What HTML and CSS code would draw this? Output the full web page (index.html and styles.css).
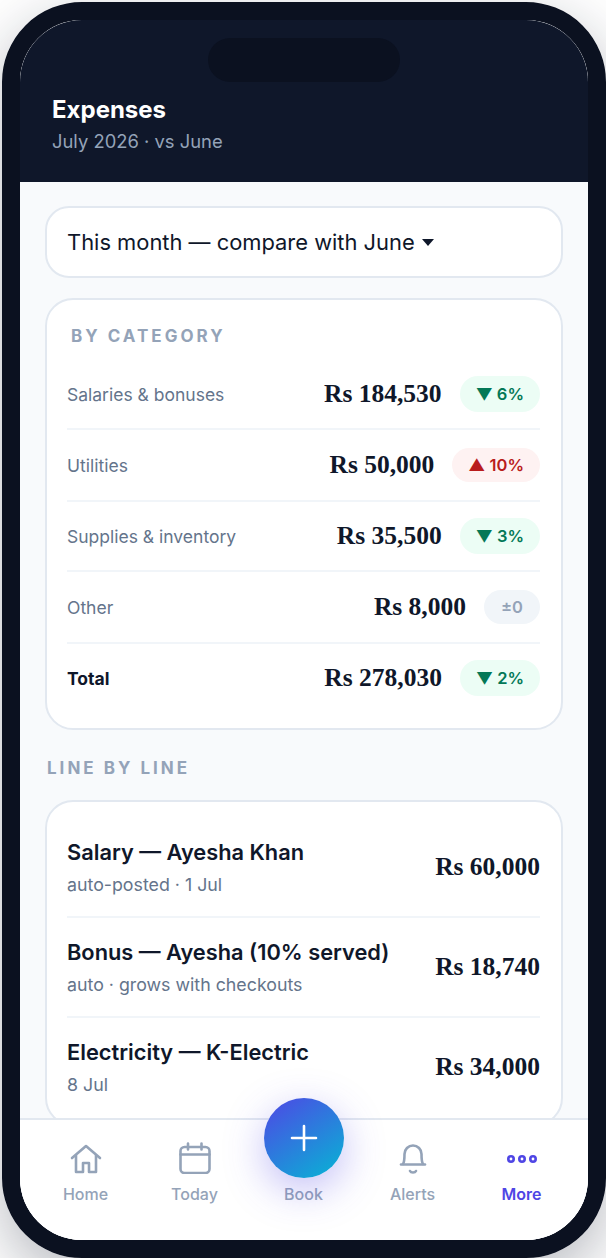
FILE: index.html
```html
<!DOCTYPE html>
<html>
<head>
<meta charset="utf-8"/>
<title>Expenses</title>
<link rel="stylesheet" href="styles.css">
</head>
<body>
<div class="phone">
  <div class="screen">
    <div class="notch"></div>
    <header class="top">
      <h1>Expenses</h1>
      <p>July 2026 · vs June</p>
    </header>

    <main class="content">
      <div class="picker">This month — compare with June <span class="caret"></span></div>

      <section class="card card-cat">
        <h2 class="cap">BY CATEGORY</h2>
        <div class="row">
          <span class="name">Salaries &amp; bonuses</span>
          <span class="amt">Rs 184,530</span>
          <span class="pill good"><i>▼</i> 6%</span>
        </div>
        <div class="row tall">
          <span class="name">Utilities</span>
          <span class="amt">Rs 50,000</span>
          <span class="pill bad"><i>▲</i> 10%</span>
        </div>
        <div class="row">
          <span class="name">Supplies &amp; inventory</span>
          <span class="amt">Rs 35,500</span>
          <span class="pill good"><i>▼</i> 3%</span>
        </div>
        <div class="row tall">
          <span class="name">Other</span>
          <span class="amt">Rs 8,000</span>
          <span class="pill flat">±0</span>
        </div>
        <div class="row">
          <span class="name total">Total</span>
          <span class="amt">Rs 278,030</span>
          <span class="pill good"><i>▼</i> 2%</span>
        </div>
      </section>

      <h2 class="cap cap-out">LINE BY LINE</h2>

      <section class="card card-lines">
        <div class="line">
          <div>
            <div class="title">Salary — Ayesha Khan</div>
            <div class="sub">auto-posted · 1 Jul</div>
          </div>
          <span class="amt">Rs 60,000</span>
        </div>
        <div class="line">
          <div>
            <div class="title">Bonus — Ayesha (10% served)</div>
            <div class="sub">auto · grows with checkouts</div>
          </div>
          <span class="amt">Rs 18,740</span>
        </div>
        <div class="line">
          <div>
            <div class="title">Electricity — K-Electric</div>
            <div class="sub">8 Jul</div>
          </div>
          <span class="amt">Rs 34,000</span>
        </div>
      </section>
    </main>

    <nav class="tabs">
      <a class="tab">
        <svg viewBox="0 0 32 32" width="32" height="32" fill="none" stroke="currentColor" stroke-width="2.6" stroke-linecap="round" stroke-linejoin="round"><path d="M2 16 16 4l14 12"/><path d="M6 13.500V30h7v-9h6v9h7V13.500"/></svg>
        Home
      </a>
      <a class="tab">
        <svg viewBox="0 0 32 32" width="32" height="32" fill="none" stroke="currentColor" stroke-width="2.6" stroke-linecap="round" stroke-linejoin="round"><rect x="1.500" y="5" width="29" height="26" rx="4"/><path d="M1.500 12.500h29M9 1.500v6M22.500 1.500v6"/></svg>
        Today
      </a>
      <a class="tab tab-mid">Book</a>
      <a class="tab">
        <svg viewBox="0 0 32 32" width="32" height="32" fill="none" stroke="currentColor" stroke-width="2.6" stroke-linecap="round" stroke-linejoin="round"><path d="M6 22c1.500-2 1.500-5 1.500-10a8.500 8.500 0 0 1 17 0c0 5 0 8 1.500 10"/><path d="M4 22.500h24"/><path d="M13 29c1 2 5 2 6 0"/></svg>
        Alerts
      </a>
      <a class="tab on">
        <svg viewBox="0 0 32 32" width="32" height="32" fill="none" stroke="currentColor" stroke-width="2.6"><circle cx="5" cy="17" r="2.700"/><circle cx="16" cy="17" r="2.700"/><circle cx="27" cy="17" r="2.700"/></svg>
        More
      </a>
    </nav>

    <button class="fab">
      <svg viewBox="0 0 28 28" width="28" height="28" fill="none" stroke="#fff" stroke-width="2.6" stroke-linecap="round"><path d="M14 2v24M2 14h24"/></svg>
    </button>
  </div>
</div>
</body>
</html>
```

FILE: styles.css
```css
html, body {
  margin: 0;
  height: 100%;
}

body {
  background: #fff;
  font-family: Inter, "Noto Sans", sans-serif;
  color: #0f172a;
  overflow: hidden;
}

.phone {
  box-sizing: border-box;
  width: 604px;
  height: 1256px;
  margin: 2px;
  border: 18px solid #0b1120;
  border-radius: 80px;
  box-shadow: 0 20px 60px rgba(15, 23, 42, 0.3);
}

.screen {
  position: relative;
  display: flex;
  flex-direction: column;
  height: 100%;
  border-radius: 62px;
  overflow: hidden;
  background: #f8fafc;
}

.notch {
  position: absolute;
  left: 188px;
  top: 18px;
  width: 192px;
  height: 44px;
  border-radius: 22px;
  background: #0b1120;
}

.top {
  flex: none;
  height: 162px;
  box-sizing: border-box;
  padding: 75px 32px 0;
  background: #0f172a;
  color: #fff;
}

.top h1 {
  margin: 0;
  font-size: 24px;
  line-height: 30px;
  font-weight: 700;
}

.top p {
  margin: 3px 0 0;
  font-size: 18.400px;
  line-height: 26px;
  color: #94a3b8;
}

.content {
  flex: 1;
  min-height: 0;
  overflow: hidden;
  padding: 24px 25px 0;
}

.picker {
  display: flex;
  align-items: center;
  gap: 7px;
  height: 72px;
  box-sizing: border-box;
  padding: 0 20px;
  border: 2px solid #e2e8f0;
  border-radius: 24px;
  background: #fff;
  font-size: 21.900px;
}

.caret {
  width: 0;
  height: 0;
  border: 6.500px solid transparent;
  border-top: 7px solid #0f172a;
  border-bottom: 0;
}

.card {
  border: 2px solid #e2e8f0;
  border-radius: 28px;
  background: #fff;
  padding: 0 21px 0 20px;
}

.card-cat {
  margin-top: 20px;
  height: 432px;
  box-sizing: border-box;
  padding-top: 25px;
}

.card-lines {
  padding-top: 16px;
  padding-bottom: 8px;
}

.cap {
  margin: 0;
  font-size: 17px;
  line-height: 22px;
  font-weight: 700;
  letter-spacing: 3px;
  color: #94a3b8;
}

.card-cat .cap {
  padding-left: 4px;
  margin-bottom: 13px;
}

.cap-out {
  margin: 27px 0 21px 2px;
}

.row {
  display: flex;
  align-items: center;
  gap: 18px;
  height: 68px;
  border-bottom: 2px solid #f1f5f9;
}

.row.tall {
  height: 70px;
}

.row:last-child {
  border-bottom: 0;
}

.name {
  flex: 1;
  font-size: 17.500px;
  color: #64748b;
}

.name.total {
  font-weight: 700;
  color: #0f172a;
}

.amt {
  font-family: "Liberation Serif", serif;
  font-weight: 700;
  font-size: 25.500px;
  color: #0f172a;
}

.pill {
  padding: 6px 16px;
  border-radius: 18px;
  font-size: 16.500px;
  line-height: 24px;
  font-weight: 600;
}

.pill i {
  font-style: normal;
}

.good {
  background: #ecfdf5;
  color: #047857;
}

.bad {
  padding: 5px 16px;
  background: #fef2f2;
  color: #b91c1c;
}

.flat {
  padding: 5px 17px;
  background: #f1f5f9;
  color: #94a3b8;
}

.line {
  display: flex;
  align-items: center;
  justify-content: space-between;
  height: 98px;
  border-bottom: 2px solid #f1f5f9;
}

.line:last-child {
  border-bottom: 0;
}

.title {
  font-size: 21.800px;
  line-height: 30px;
  font-weight: 600;
}

.sub {
  margin-top: 6px;
  font-size: 17.800px;
  line-height: 24px;
  color: #64748b;
}

.tabs {
  flex: none;
  display: flex;
  height: 122px;
  box-sizing: border-box;
  padding: 0 12px 0 11px;
  border-top: 2px solid #e2e8f0;
  background: #fff;
}

.tab {
  flex: 1;
  display: flex;
  flex-direction: column;
  align-items: center;
  padding-top: 22px;
  font-size: 16px;
  font-weight: 500;
  line-height: 20px;
  color: #94a3b8;
}

.tab svg {
  margin-bottom: 10px;
}

.tab-mid {
  padding-top: 64px;
}

.tab.on {
  color: #4f46e5;
  font-weight: 600;
}

.fab {
  position: absolute;
  left: 244px;
  top: 1078px;
  width: 80px;
  height: 80px;
  padding: 0;
  display: flex;
  align-items: center;
  justify-content: center;
  border: 0;
  border-radius: 50%;
  background: linear-gradient(145deg, #4f46e5, #06b6d4);
  box-shadow: 0 12px 40px rgba(79, 70, 229, 0.35);
}
```
